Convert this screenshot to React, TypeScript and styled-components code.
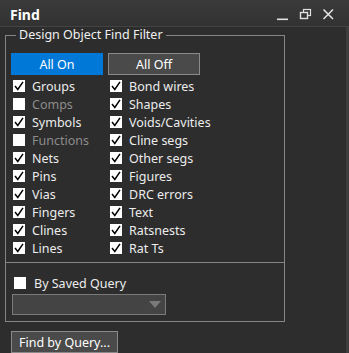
import { Fragment } from "react";
import styled, { createGlobalStyle } from "styled-components";

const Global = createGlobalStyle`
  html, body {
    margin: 0;
    padding: 0;
    background: #2d2d2d;
  }
  body {
    font-family: "Noto Sans", "Open Sans", sans-serif;
    font-size: 12px;
    color: #e8e8e8;
  }
`;

const Window = styled.div`
  width: 349px;
  height: 353px;
  overflow: hidden;
  background: #2d2d2d;
`;

const TitleBar = styled.div`
  height: 26px;
  display: flex;
  align-items: center;
  padding-left: 10px;
  background: linear-gradient(#3a3a3a, #323232);
  border-bottom: 1px solid #444444;
`;

const Title = styled.div`
  flex: 1;
  font-weight: bold;
  font-size: 14px;
  color: #ffffff;
  padding-top: 2px;
`;

const WinButtons = styled.div`
  display: flex;
  align-items: center;
  gap: 10px;
  padding-right: 14px;
  padding-top: 2px;
`;

const Body = styled.div`
  height: 326px;
  display: flex;
`;

const Main = styled.div`
  flex: 1;
  padding-left: 5px;
`;

const Strip = styled.div`
  width: 3px;
  background: #3e3e3e;
`;

const Frame = styled.fieldset`
  width: 280px;
  box-sizing: border-box;
  margin: 0;
  padding: 0 4px 5px 5px;
  border: 1px solid #858585;
`;

const Legend = styled.legend`
  padding: 0 3px;
  margin-left: 5px;
  line-height: 16px;
  color: #f0f0f0;
  font-size: 12.5px;
`;

const ButtonRow = styled.div`
  display: flex;
  gap: 5px;
  margin-top: 10px;
  margin-bottom: 2px;
`;

const Btn = styled.div<{ $primary?: boolean; $w: number }>`
  width: ${(p) => p.$w}px;
  height: 22px;
  box-sizing: border-box;
  display: flex;
  align-items: center;
  justify-content: center;
  color: #ffffff;
  font-size: 12.5px;
  background: ${(p) => (p.$primary ? "#0078d7" : "#4a4a4a")};
  border: 1px solid ${(p) => (p.$primary ? "#0078d7" : "#8a8a8a")};
`;

const Grid = styled.div`
  display: grid;
  grid-template-columns: 97px 1fr;
  grid-auto-rows: 18px;
  padding-left: 2px;
`;

const Row = styled.div`
  display: flex;
  align-items: center;
  gap: 7px;
`;

const Box = styled.div`
  width: 12px;
  height: 12px;
  background: #ffffff;
  display: flex;
  align-items: center;
  justify-content: center;
  flex-shrink: 0;
`;

const Label = styled.span<{ $off?: boolean }>`
  color: ${(p) => (p.$off ? "#8c8c8c" : "#ececec")};
  font-size: 12.5px;
  white-space: nowrap;
`;

const QueryFrame = styled.div`
  width: 280px;
  height: 59px;
  box-sizing: border-box;
  border: 1px solid #858585;
  border-top: none;
  padding: 14px 0 0 6px;
`;

const QueryRow = styled(Row)`
  height: 12px;
  padding-left: 2px;
  gap: 8px;
`;

const Select = styled.div`
  margin-top: 5px;
  width: 154px;
  height: 21px;
  box-sizing: border-box;
  background: #444444;
  border: 1px solid #7a7a7a;
  display: flex;
  align-items: center;
  justify-content: flex-end;
  padding-right: 4px;
`;

const Footer = styled.div`
  padding: 9px 0 0 6px;
`;

const Check = () => (
  <svg width="10" height="10" viewBox="0 0 10 10">
    <polyline points="1,5 3.8,8.5 9,0.8" fill="none" stroke="#000" strokeWidth="1.5" />
  </svg>
);

const left: [string, boolean][] = [
  ["Groups", true],
  ["Comps", false],
  ["Symbols", true],
  ["Functions", false],
  ["Nets", true],
  ["Pins", true],
  ["Vias", true],
  ["Fingers", true],
  ["Clines", true],
  ["Lines", true],
];

const right = [
  "Bond wires",
  "Shapes",
  "Voids/Cavities",
  "Cline segs",
  "Other segs",
  "Figures",
  "DRC errors",
  "Text",
  "Ratsnests",
  "Rat Ts",
];

export default function App() {
  return (
    <Window>
      <Global />
      <TitleBar>
        <Title>Find</Title>
        <WinButtons>
          <svg width="13" height="13" viewBox="0 0 13 13">
            <rect x="1" y="10.5" width="11" height="1.6" fill="#e0e0e0" />
          </svg>
          <svg width="13" height="13" viewBox="0 0 13 13">
            <rect x="4.5" y="1.5" width="7" height="6" fill="none" stroke="#e0e0e0" strokeWidth="1.2" />
            <rect x="1.5" y="4.5" width="7" height="6" fill="#363636" stroke="#e0e0e0" strokeWidth="1.4" />
          </svg>
          <svg width="13" height="13" viewBox="0 0 13 13">
            <path d="M1.5 1.5 L11 11 M11 1.5 L1.5 11" stroke="#e6e6e6" strokeWidth="1.5" />
          </svg>
        </WinButtons>
      </TitleBar>
      <Body>
        <Main>
          <Frame>
            <Legend>Design Object Find Filter</Legend>
            <ButtonRow>
              <Btn $primary $w={92}>All On</Btn>
              <Btn $w={92}>All Off</Btn>
            </ButtonRow>
            <Grid>
              {left.map(([name, on], i) => (
                <Fragment key={name}>
                  <Row>
                    <Box>{on && <Check />}</Box>
                    <Label $off={!on}>{name}</Label>
                  </Row>
                  <Row>
                    <Box>
                      <Check />
                    </Box>
                    <Label>{right[i]}</Label>
                  </Row>
                </Fragment>
              ))}
            </Grid>
          </Frame>
          <QueryFrame>
            <QueryRow>
              <Box />
              <Label>By Saved Query</Label>
            </QueryRow>
            <Select>
              <svg width="12" height="8" viewBox="0 0 12 8">
                <polygon points="0,0 12,0 6,7" fill="#7a7a7a" />
              </svg>
            </Select>
          </QueryFrame>
          <Footer>
            <Btn $w={107}>Find by Query...</Btn>
          </Footer>
        </Main>
        <Strip />
      </Body>
    </Window>
  );
}
